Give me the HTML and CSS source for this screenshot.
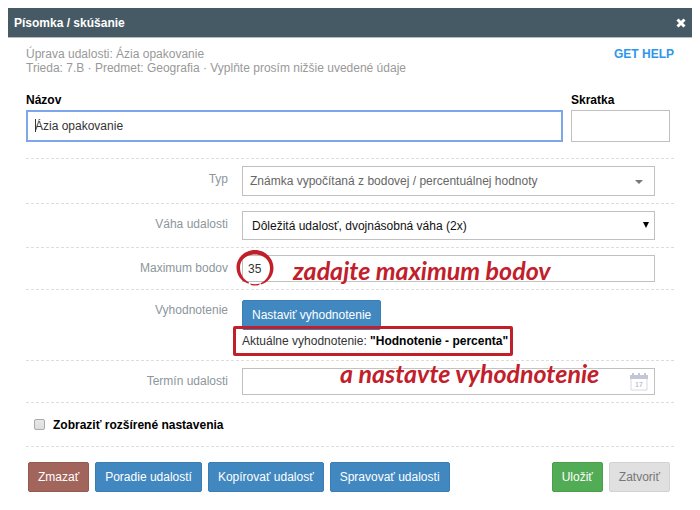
FILE: index.html
```html
<!DOCTYPE html>
<html lang="sk">

<head>
  <meta charset="utf-8">
  <title>Písomka / skúšanie</title>
  <link rel="stylesheet" href="styles.css">
</head>

<body>
  <form class="dialog">
    <div class="dialog-header">
      <h1>Písomka / skúšanie</h1>
      <button type="button" class="close" aria-label="Zatvoriť okno">
        <svg width="10" height="10" viewBox="0 0 10 10"><path d="M1.5 1.5 8.5 8.5M8.5 1.5 1.5 8.5" stroke="#fff" stroke-width="3" /></svg>
      </button>
    </div>
    <div class="dialog-body">
      <div class="intro">
        <p>Úprava udalosti: Ázia opakovanie<br>Trieda: 7.B · Predmet: Geografia · Vyplňte prosím nižšie uvedené údaje</p>
        <a href="#" class="help">GET HELP</a>
      </div>

      <div class="names">
        <div class="name-field caret">
          <label for="name">Názov</label>
          <input id="name" class="tall focused" type="text" value="Ázia opakovanie">
        </div>
        <div class="short-field">
          <label for="short">Skratka</label>
          <input id="short" class="tall" type="text">
        </div>
      </div>

      <div class="row">
        <label for="type">Typ</label>
        <div class="field">
          <select id="type" class="type">
            <option>Známka vypočítaná z bodovej / percentuálnej hodnoty</option>
          </select>
          <svg class="arrow-type" width="8" height="4" viewBox="0 0 8 4"><path d="M0 0H8L4 4Z" fill="#777" /></svg>
        </div>
      </div>
      <div class="row">
        <label for="weight">Váha udalosti</label>
        <div class="field">
          <select id="weight" class="weight">
            <option>Dôležitá udalosť, dvojnásobná váha (2x)</option>
          </select>
          <svg class="arrow-weight" width="6" height="6" viewBox="0 0 6 6"><path d="M0 0H6L3 6Z" fill="#000" /></svg>
        </div>
      </div>
      <div class="row">
        <label for="points">Maximum bodov</label>
        <div class="field">
          <input id="points" type="text" value="35">
          <svg class="circle" width="40" height="38" viewBox="0 0 40 38">
            <path fill="#c1202b" fill-rule="evenodd" d="M20 1C30 1 38.500 9 38.500 19C38.500 27 33 33.500 26 35.500L25.500 34.200C31 32 35 26 35 19C35 11 28.500 5.500 20 5.500C11 5.500 5 11 5 18.500C5 25 8.500 30.500 14 33.500L13.500 34.800C6 32 1.500 26 1.500 18.500C1.500 9 9.500 1 20 1ZM15 34.500Q20 36 25 34.500L24 36Q20 37 16 36Z" />
          </svg>
          <span class="note note-points">zadajte maximum bodov</span>
        </div>
      </div>
      <div class="row row-rating">
        <span class="label">Vyhodnotenie</span>
        <div class="field">
          <button type="button" class="btn">Nastaviť vyhodnotenie</button>
          <p class="rating">Aktuálne vyhodnotenie: <b>"Hodnotenie - percenta"</b></p>
        </div>
      </div>
      <div class="row">
        <label for="date">Termín udalosti</label>
        <div class="field">
          <input id="date" type="text">
          <svg class="calendar" width="18" height="18" viewBox="0 0 18 18">
            <path d="M1 4V17H17V4" fill="#fff" stroke="#d9d9e0" />
            <path d="M0 2H2V0H4V2H8V0H10V2H14V0H16V2H18V6H0Z" fill="#c3c6d6" />
            <text x="9" y="14">17</text>
          </svg>
          <span class="note note-date">a nastavte vyhodnotenie</span>
        </div>
      </div>

      <div class="advanced">
        <input id="advanced" type="checkbox">
        <label for="advanced">Zobraziť rozšírené nastavenia</label>
      </div>

      <div class="buttons">
        <button type="button" class="btn btn-delete">Zmazať</button>
        <button type="button" class="btn">Poradie udalostí</button>
        <button type="button" class="btn">Kopírovať udalosť</button>
        <button type="button" class="btn">Spravovať udalosti</button>
        <button type="submit" class="btn btn-save">Uložiť</button>
        <button type="button" class="btn btn-close">Zatvoriť</button>
      </div>
    </div>
  </form>
</body>

</html>
```
FILE: styles.css
```css
* {
  box-sizing: border-box;
}

body {
  margin: 8px;
  background: #fff;
  color: #333;
  font-family: "Liberation Sans", Arial, sans-serif;
  font-size: 12px;
  line-height: 14px;
}

input, select, button {
  font: inherit;
}

p {
  margin: 0;
}

.dialog {
  background: #fff;
  outline: 1px solid #dcdcdc;
  box-shadow: 0 0 8px 2px rgba(0, 0, 0, 0.3);
}

.dialog-header {
  display: flex;
  align-items: center;
  justify-content: space-between;
  height: 30px;
  padding: 0 6px;
  background: #465a65;
  border-bottom: 1px solid #bbb;
}

.dialog-header h1 {
  margin: 0;
  color: #fff;
  font-size: 12px;
}

.close {
  display: flex;
  padding: 0;
  border: 0;
  background: none;
}

.dialog-body {
  padding: 9px 18px 10px;
}

.intro {
  display: flex;
  justify-content: space-between;
  color: #999;
}

.help {
  color: #2f96ee;
  font-weight: bold;
  text-decoration: none;
}

.names {
  display: flex;
  gap: 8px;
  padding: 18px 4px 16px 0;
}

.names label {
  display: block;
  margin-bottom: 3px;
  color: #000;
  font-weight: bold;
}

.name-field {
  position: relative;
  flex: 1;
}

.short-field {
  width: 99px;
}

input[type="text"], select {
  display: block;
  width: 100%;
  height: 27px;
  padding: 0 8px;
  border: 1px solid #c0c0c0;
  border-radius: 0;
  background: #fff;
  color: #333;
}

input.tall {
  height: 32px;
}

#points {
  padding-left: 5px;
}

input.focused {
  padding: 0 7px;
  border: 2px solid #7da7ec;
}

/* text cursor in the active field */
.caret::after {
  content: "";
  position: absolute;
  left: 9px;
  bottom: 10px;
  width: 1px;
  height: 13px;
  background: #333;
}

.row {
  display: flex;
  gap: 14px;
  padding: 7px 19px 7px 0;
  border-top: 1px dashed #ddd;
}

.row > label, .label {
  width: 202px;
  padding-top: 6px;
  color: #8d969c;
  text-align: right;
}

.row > .label {
  padding-top: 3px;
}

.field {
  position: relative;
  flex: 1;
}

select {
  appearance: none;
}

.type {
  height: 30px;
  padding: 0 7px;
  color: #666;
}

.weight {
  height: 29px;
  padding: 0 9px;
  color: #111;
}

.arrow-type {
  position: absolute;
  right: 12px;
  top: 14px;
}

.arrow-weight {
  position: absolute;
  right: 6px;
  top: 11px;
}

.circle {
  position: absolute;
  left: -7px;
  top: -6px;
}

/* red handwritten hints over the form */
.note {
  position: absolute;
  color: #c1202b;
  font-family: "Segoe Print", Lato, cursive;
  font-size: 25px;
  font-style: italic;
  font-weight: bold;
  line-height: 28px;
  white-space: nowrap;
  text-shadow: 0 0 2px #fff, 0 0 3px #fff;
  pointer-events: none;
}

.note-points {
  left: 51px;
  top: 1px;
}

.note-date {
  left: 98px;
  top: -9px;
}

.row-rating {
  padding-top: 10px;
  padding-bottom: 8px;
}

.rating {
  position: relative;
  width: max-content;
  line-height: 22px;
}

.rating b {
  color: #000;
}

.rating::after {
  content: "";
  position: absolute;
  inset: -4px -5px -4px -9px;
  border: 3px solid #c1202b;
  border-radius: 2px;
}

.calendar {
  position: absolute;
  right: 7px;
  top: 5px;
}

.calendar text {
  fill: #c3c6d6;
  font-size: 7px;
  font-weight: bold;
  text-anchor: middle;
}

.advanced {
  display: flex;
  align-items: center;
  height: 44px;
  padding-left: 8px;
  border-top: 1px dashed #ddd;
  color: #000;
  font-weight: bold;
}

.advanced input {
  appearance: none;
  width: 11px;
  height: 11px;
  margin: 0 8px 0 0;
  border: 1px solid #aaa;
  border-radius: 2px;
  background: linear-gradient(#e8e8e8, #ddd);
}

.buttons {
  display: flex;
  gap: 6px;
  padding: 15px 4px 0 2px;
  border-top: 1px dashed #ddd;
}

.btn {
  display: block;
  height: 30px;
  padding: 0 9px;
  border: 1px solid #3b7db5;
  border-radius: 2px;
  background: #4188c1;
  color: #fff;
  white-space: nowrap;
}

.btn-delete {
  border-color: #955b52;
  background: #a1655c;
}

.btn-save {
  margin-left: auto;
  border-color: #4a9f4d;
  background: #52ab55;
}

.btn-close {
  border-color: #d2d2d2;
  background: #e0e0e0;
  color: #777;
}
```
